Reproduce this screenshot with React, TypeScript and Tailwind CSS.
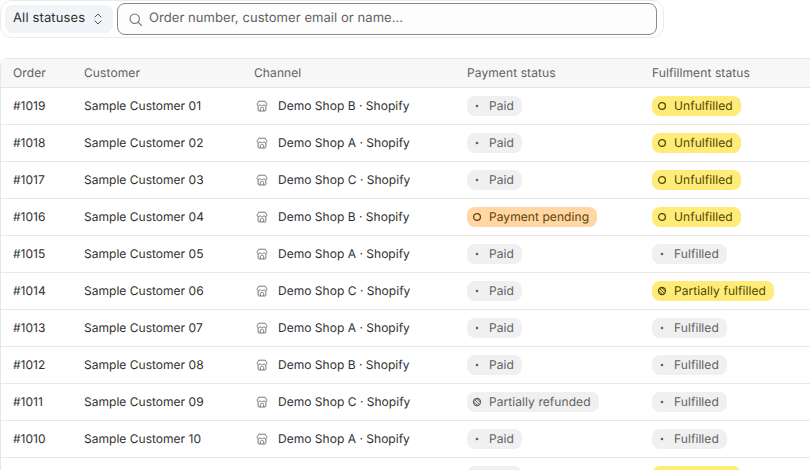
import React from "react";

type Kind = "paid" | "fulfilled" | "refunded" | "pending" | "unfulfilled" | "partial";

const rows: [string, string, string, Kind, Kind][] = [
  ["#1019", "Sample Customer 01", "B", "paid", "unfulfilled"],
  ["#1018", "Sample Customer 02", "A", "paid", "unfulfilled"],
  ["#1017", "Sample Customer 03", "C", "paid", "unfulfilled"],
  ["#1016", "Sample Customer 04", "B", "pending", "unfulfilled"],
  ["#1015", "Sample Customer 05", "A", "paid", "fulfilled"],
  ["#1014", "Sample Customer 06", "C", "paid", "partial"],
  ["#1013", "Sample Customer 07", "A", "paid", "fulfilled"],
  ["#1012", "Sample Customer 08", "B", "paid", "fulfilled"],
  ["#1011", "Sample Customer 09", "C", "refunded", "fulfilled"],
  ["#1010", "Sample Customer 10", "A", "paid", "fulfilled"],
  ["#1009", "Sample Customer 11", "B", "paid", "unfulfilled"],
];

const Dot = () => (
  <svg width="12" height="12" viewBox="0 0 12 12" className="shrink-0">
    <circle cx="6" cy="6" r="1.3" fill="currentColor" />
  </svg>
);
const Ring = () => (
  <svg width="12" height="12" viewBox="0 0 12 12" className="shrink-0" fill="none">
    <circle cx="6" cy="6" r="3.4" stroke="currentColor" strokeWidth="1.3" />
  </svg>
);
const Slashed = () => (
  <svg width="12" height="12" viewBox="0 0 12 12" className="shrink-0" fill="none">
    <circle cx="6" cy="6" r="3.5" stroke="currentColor" strokeWidth="1.3" />
    <path d="M3.6 3.6l4.8 4.8M2.9 5.7l3.4 3.4M5.7 2.9l3.4 3.4" stroke="currentColor" strokeWidth="0.9" />
  </svg>
);

const badges: Record<Kind, { label: string; cls: string; icon: React.ReactNode }> = {
  paid: { label: "Paid", cls: "bg-[#f0f0f0] text-[#616161]", icon: <Dot /> },
  fulfilled: { label: "Fulfilled", cls: "bg-[#f0f0f0] text-[#616161]", icon: <Dot /> },
  refunded: { label: "Partially refunded", cls: "bg-[#f0f0f0] text-[#616161]", icon: <Slashed /> },
  pending: { label: "Payment pending", cls: "bg-[#ffd6a4] text-[#5e4200]", icon: <Ring /> },
  unfulfilled: { label: "Unfulfilled", cls: "bg-[#ffeb78] text-[#4f4700]", icon: <Ring /> },
  partial: { label: "Partially fulfilled", cls: "bg-[#ffeb78] text-[#4f4700]", icon: <Slashed /> },
};

const Badge = ({ kind }: { kind: Kind }) => {
  const b = badges[kind];
  return (
    <span className={`inline-flex h-5 items-center gap-[6px] rounded-lg pl-[4px] pr-2 text-[12px] tracking-[0.006em] ${b.cls}`}>
      {b.icon}
      {b.label}
    </span>
  );
};

const Store = () => (
  <svg width="14" height="14" viewBox="0 0 14 14" fill="none" stroke="#7a7a7a" strokeWidth="1" className="shrink-0">
    <path d="M3.8 2.2h6.4l1.6 2.6c.3 1-.4 1.9-1.3 1.9-.8 0-1.3-.5-1.5-1.1-.2.6-.9 1.1-1.6 1.1h-.8c-.7 0-1.4-.5-1.6-1.1-.2.6-.7 1.1-1.5 1.1-.9 0-1.6-.9-1.3-1.9z" />
    <path d="M3.1 6.7v4.4c0 .5.4.9.9.9h6c.5 0 .9-.4.9-.9V6.7" />
    <path d="M5.3 12V9.6c0-.6.5-1.1 1.1-1.1h1.2c.6 0 1.1.5 1.1 1.1V12" />
  </svg>
);

export default function App() {
  return (
    <div className="h-[470px] w-[810px] overflow-hidden bg-white font-['Inter',sans-serif] text-[12px] font-normal text-[#303030] antialiased [text-rendering:geometricPrecision]">
      <div className="flex h-[38px] w-[664px] items-center gap-[4px] rounded-xl border border-[#ebebeb] pl-1 pr-[6px]">
        <div className="flex h-[28px] w-[108px] items-center gap-[6px] rounded-lg bg-[#f1f5f8] pl-2 text-[13px] tracking-[0.01em] text-[#303030]">
          All statuses
          <svg width="14" height="14" viewBox="0 0 14 14" fill="none" stroke="#555555" strokeWidth="1" strokeLinecap="round" strokeLinejoin="round">
            <path d="M4 5 7 2l3 3M4 9l3 3 3-3" />
          </svg>
        </div>
        <div className="flex h-[32px] flex-1 items-center gap-[6px] rounded-lg border border-[#8a8a8a] bg-[#fdfdfd] pl-[10px] text-[13px] tracking-[0.005em] text-[#616161]">
          <svg width="15" height="15" viewBox="0 0 15 15" fill="none" stroke="#777777" strokeWidth="1.1" strokeLinecap="round">
            <circle cx="6.7" cy="6.7" r="4.7" />
            <path d="m10.3 10.3 3.2 3.2" />
          </svg>
          Order number, customer email or name...
        </div>
      </div>

      <div className="mt-5 w-[830px] rounded-tl-lg border-l border-t border-[#e6e6e6]">
        <div className="flex h-[29px] items-center border-b border-[#e3e3e3] bg-[#f7f7f7] tracking-[0.008em] text-[#616161]">
          <div className="w-[83px] pl-3">Order</div>
          <div className="w-[170px]">Customer</div>
          <div className="w-[213px]">Channel</div>
          <div className="w-[185px]">Payment status</div>
          <div>Fulfillment status</div>
        </div>
        {rows.map(([id, name, shop, pay, ful]) => (
          <div key={id} className="flex h-[37px] items-center border-b border-[#e8e8e8] tracking-[0.002em]">
            <div className="w-[83px] pl-3">{id}</div>
            <div className="w-[170px]">{name}</div>
            <div className="flex w-[213px] items-center gap-[9px] pl-[1px]">
              <Store />
              <span>Demo Shop {shop} · Shopify</span>
            </div>
            <div className="w-[185px]"><Badge kind={pay} /></div>
            <div><Badge kind={ful} /></div>
          </div>
        ))}
      </div>
    </div>
  );
}
